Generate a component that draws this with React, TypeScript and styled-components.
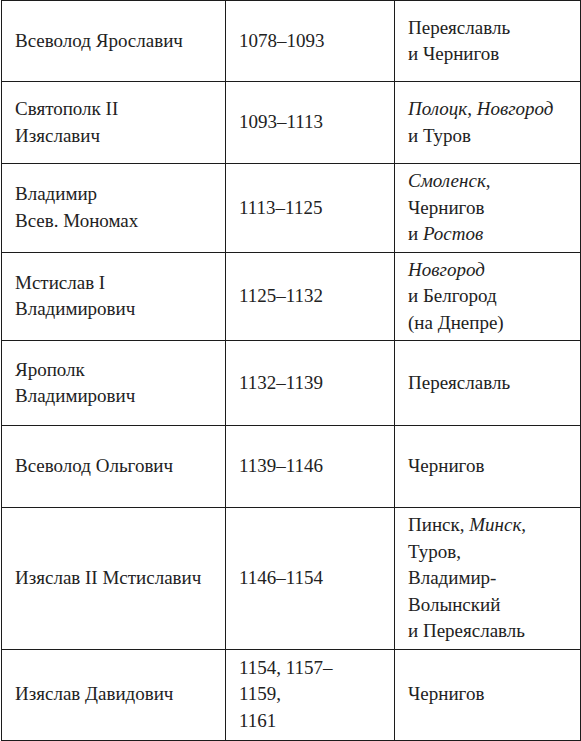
import React from 'react';
import styled, { createGlobalStyle } from 'styled-components';

const GlobalStyle = createGlobalStyle`
  html, body {
    margin: 0;
    padding: 0;
    background: #ffffff;
  }
`;

const Page = styled.div`
  padding: 0 0 0 1px;
  font-family: 'Liberation Serif', serif;
  color: #222222;
`;

const Table = styled.table`
  width: 579px;
  border-collapse: collapse;
  table-layout: fixed;
`;

const Col = styled.col<{ width: number }>`
  width: ${({ width }) => width}px;
`;

const Row = styled.tr<{ height?: number }>`
  height: ${({ height }) => height ?? 82}px;
`;

const Cell = styled.td`
  border: 1px solid #1c1c1c;
  padding: 4px 10px 4px 13px;
  vertical-align: middle;
  text-align: left;
  font-family: 'Liberation Serif', serif;
  font-size: 19px;
  line-height: 26.5px;
  color: #222222;
`;

const I = styled.em`
  font-style: italic;
`;

type Ruler = {
  name: React.ReactNode;
  years: React.ReactNode;
  cities: React.ReactNode;
  height?: number;
};

const rulers: Ruler[] = [
  {
    name: 'Всеволод Ярославич',
    years: '1078–1093',
    cities: (
      <>
        Переяславль
        <br />и Чернигов
      </>
    ),
    height: 81,
  },
  {
    name: (
      <>
        Святополк II
        <br />
        Изяславич
      </>
    ),
    years: '1093–1113',
    cities: (
      <>
        <I>Полоцк</I>, <I>Новгород</I>
        <br />и Туров
      </>
    ),
  },
  {
    name: (
      <>
        Владимир
        <br />
        Всев. Мономах
      </>
    ),
    years: '1113–1125',
    cities: (
      <>
        <I>Смоленск</I>,
        <br />
        Чернигов
        <br />и <I>Ростов</I>
      </>
    ),
  },
  {
    name: (
      <>
        Мстислав I
        <br />
        Владимирович
      </>
    ),
    years: '1125–1132',
    cities: (
      <>
        <I>Новгород</I>
        <br />и Белгород
        <br />
        (на Днепре)
      </>
    ),
  },
  {
    name: (
      <>
        Ярополк
        <br />
        Владимирович
      </>
    ),
    years: '1132–1139',
    cities: 'Переяславль',
    height: 85,
  },
  {
    name: 'Всеволод Ольгович',
    years: '1139–1146',
    cities: 'Чернигов',
  },
  {
    name: 'Изяслав II Мстиславич',
    years: '1146–1154',
    cities: (
      <>
        Пинск, <I>Минск</I>,
        <br />
        Туров,
        <br />
        Владимир-
        <br />
        Волынский
        <br />и Переяславль
      </>
    ),
  },
  {
    name: 'Изяслав Давидович',
    years: (
      <>
        1154, 1157–
        <br />
        1159,
        <br />
        1161
      </>
    ),
    cities: 'Чернигов',
    height: 91,
  },
];

const App = () => {
  return (
    <Page>
      <GlobalStyle />
      <Table>
        <colgroup>
          <Col width={224} />
          <Col width={169} />
          <Col width={186} />
        </colgroup>
        <tbody>
          {rulers.map((r, i) => (
            <Row key={i} height={r.height}>
              <Cell>{r.name}</Cell>
              <Cell>{r.years}</Cell>
              <Cell>{r.cities}</Cell>
            </Row>
          ))}
        </tbody>
      </Table>
    </Page>
  );
};

export default App;
